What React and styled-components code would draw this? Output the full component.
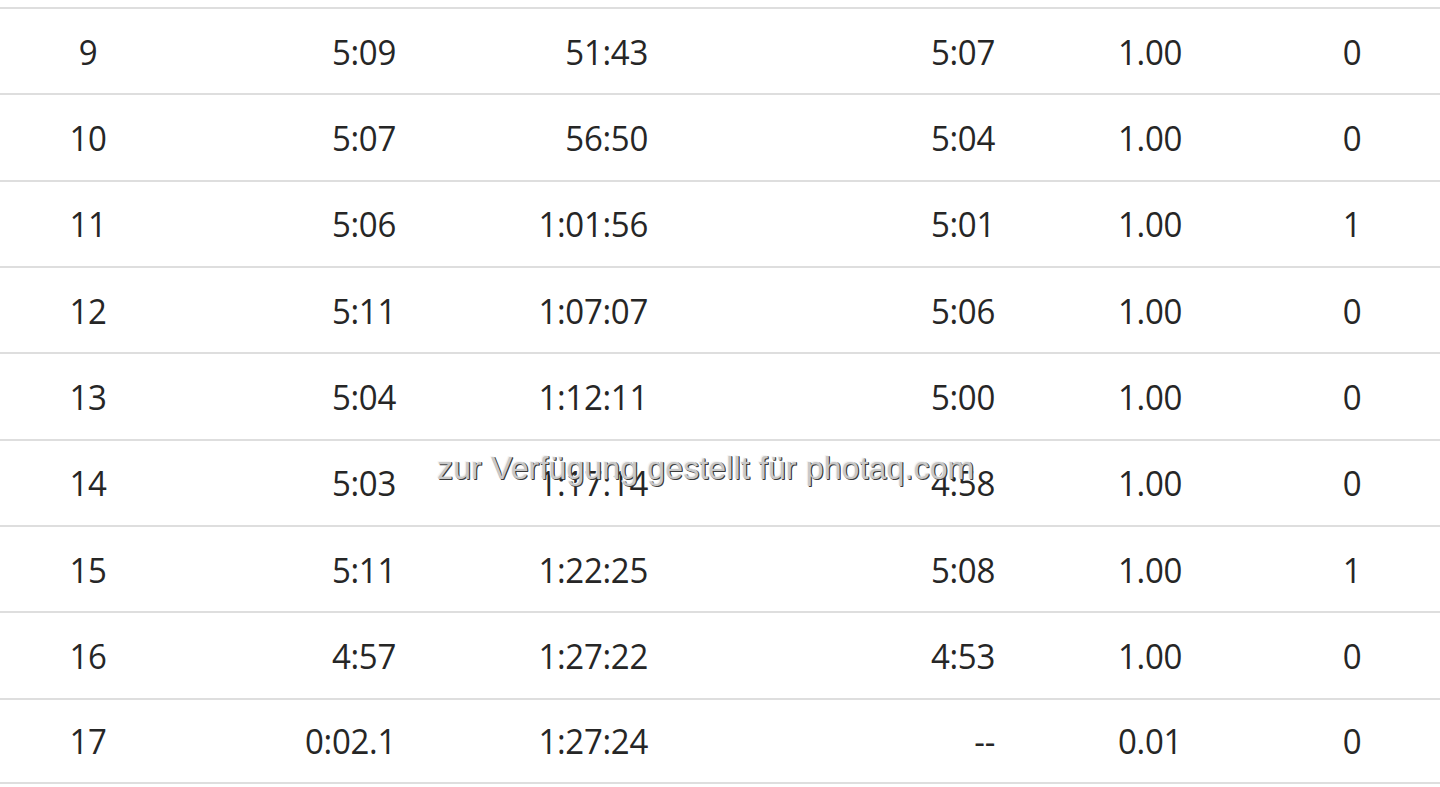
import styled, { createGlobalStyle } from "styled-components";

const SPLITS = [
  { lap: "9", time: "5:09", total: "51:43", moving: "5:07", dist: "1.00", elev: "0" },
  { lap: "10", time: "5:07", total: "56:50", moving: "5:04", dist: "1.00", elev: "0" },
  { lap: "11", time: "5:06", total: "1:01:56", moving: "5:01", dist: "1.00", elev: "1" },
  { lap: "12", time: "5:11", total: "1:07:07", moving: "5:06", dist: "1.00", elev: "0" },
  { lap: "13", time: "5:04", total: "1:12:11", moving: "5:00", dist: "1.00", elev: "0" },
  { lap: "14", time: "5:03", total: "1:17:14", moving: "4:58", dist: "1.00", elev: "0" },
  { lap: "15", time: "5:11", total: "1:22:25", moving: "5:08", dist: "1.00", elev: "1" },
  { lap: "16", time: "4:57", total: "1:27:22", moving: "4:53", dist: "1.00", elev: "0" },
  { lap: "17", time: "0:02.1", total: "1:27:24", moving: "--", dist: "0.01", elev: "0" },
];

const GlobalStyle = createGlobalStyle`
  html, body {
    margin: 0;
    padding: 0;
    background: #fff;
  }
`;

const App = () => {
  return (
    <>
      <GlobalStyle />
      <Wrapper>
        <Table>
          {SPLITS.map((row) => (
            <Row key={row.lap}>
              <Cell $align="center">{row.lap}</Cell>
              <Cell $align="right">{row.time}</Cell>
              <Cell $align="right">{row.total}</Cell>
              <Cell $align="right">{row.moving}</Cell>
              <Cell $align="center">{row.dist}</Cell>
              <Cell $align="center">{row.elev}</Cell>
              <Cell />
            </Row>
          ))}
        </Table>
        <Watermark>zur Verfügung gestellt für photaq.com</Watermark>
      </Wrapper>
    </>
  );
};

export default App;

const Wrapper = styled.div`
  position: relative;
  width: 1440px;
  height: 787px;
  overflow: hidden;
  padding-top: 7px;
  box-sizing: border-box;
  background: #fff;
`;

const Table = styled.div`
  display: flex;
  flex-direction: column;
`;

const Row = styled.div`
  display: grid;
  grid-template-columns: 176px 220px 252px 347px 310px 94px 1fr;
  align-items: center;
  height: 86.33px;
  box-sizing: border-box;
  border-top: 2px solid #dedede;

  &:last-child {
    border-bottom: 2px solid #dedede;
  }
`;

const Cell = styled.div`
  text-align: ${(p) => p.$align || "left"};
  font-family: "Open Sans", "Noto Sans", sans-serif;
  font-size: 33px;
  font-weight: 400;
  color: #262626;
  line-height: 1;
  white-space: nowrap;
  letter-spacing: -0.3px;
  transform: scaleY(1.05);
`;

const Watermark = styled.div`
  position: absolute;
  left: 437px;
  top: 452px;
  font-family: "Liberation Sans", Arial, sans-serif;
  font-size: 32px;
  line-height: 1;
  color: #c8c8c8;
  white-space: nowrap;
  letter-spacing: 0.15px;
  text-shadow: 1px 1px 0 #3a3a3a, -1px -1px 0 #f4f4f4, 1px 0 0 #555;
`;
